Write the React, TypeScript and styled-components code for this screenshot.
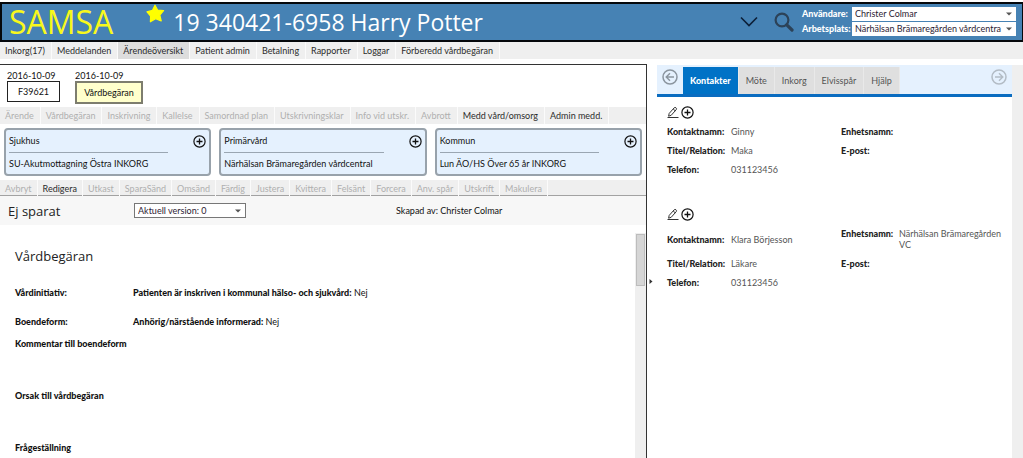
import React from "react";
import styled, { createGlobalStyle } from "styled-components";

const small = '"Lato", "Open Sans", sans-serif';
const large = '"Open Sans", "Noto Sans", sans-serif';

const GlobalStyle = createGlobalStyle`
  *, *::before, *::after { box-sizing: border-box; }
  body { margin: 0; background: #ffffff; color: #111111; font: 9px/11px ${small}; }
  button, select { font: inherit; color: inherit; }
  button { border: 0; padding: 0; background: none; cursor: pointer; }
  h1, h2, p, dl, dd { margin: 0; font-weight: 400; }
`;

const Page = styled.div`
  display: flex;
  flex-direction: column;
  height: 100vh;
  overflow: hidden;
`;

const Header = styled.header`
  flex: none;
  display: flex;
  align-items: center;
  height: 40px;
  margin-top: 2px;
  padding: 0 6px 0 7px;
  border: 2px solid #05080c;
  border-right-width: 1px;
  background: #4682b4;
  color: #ffffff;
`;

const Brand = styled.a`
  font: 32px/36px ${large};
  color: #f8f81c;
  text-decoration: none;
`;

const StarButton = styled.button`
  align-self: flex-start;
  height: 19px;
  margin: 0 8px 0 33px;
`;

const PatientTitle = styled.h1`
  flex: 1;
  font: 23px/36px ${large};
  white-space: nowrap;
`;

const HeaderButton = styled.button`
  display: flex;
  margin-left: 16px;
`;

const Session = styled.div`
  display: grid;
  grid-template-columns: 50px 164px;
  row-gap: 1px;
  align-items: center;
  margin-left: 8px;
  padding-bottom: 2px;
`;

const SessionLabel = styled.label`
  font-weight: 900;
`;

const SelectBox = styled.span<{ $outlined?: boolean }>`
  display: flex;
  align-items: center;
  height: ${(p) => (p.$outlined ? 15 : 14)}px;
  width: ${(p) => (p.$outlined ? "112px" : "auto")};
  padding-right: 4px;
  border: ${(p) => (p.$outlined ? "1px solid #777777" : "0")};
  background: #ffffff;
  color: #2d2233;
`;

const Select = styled.select`
  flex: 1;
  min-width: 0;
  appearance: none;
  border: 0;
  padding: 0 0 0 3px;
  background: transparent;
`;

const Bar = styled.nav`
  flex: none;
  display: flex;
  background: #efefef;
`;

const BarItem = styled.button<{ $active?: boolean; $underlined?: boolean }>`
  height: ${(p) => (p.$underlined ? 16 : 17)}px;
  padding: ${(p) => (p.$underlined ? "0 5px" : "0 6px 0 5px")};
  border-right: 1px solid #fbfbfb;
  background: ${(p) => (p.$active ? "#dddddd" : "#efefef")};
  color: #2b2b2b;
  white-space: nowrap;
  box-shadow: ${(p) => (p.$underlined ? "inset 0 -1px 0 #a2a2a2" : "none")};

  &:disabled {
    color: #b0b0b0;
    cursor: default;
  }
`;

const BarRest = styled.span`
  flex: 1;
  border-bottom: 1px solid #a2a2a2;
`;

const Main = styled.main`
  flex: 1;
  min-height: 0;
  display: grid;
  grid-template-columns: minmax(0, 647fr) minmax(0, 376fr);
`;

const CasePanel = styled.section`
  display: flex;
  flex-direction: column;
  min-height: 0;
  margin-top: 5px;
  border-top: 1px solid #333333;
  border-right: 1px solid #333333;
`;

const Documents = styled.div`
  display: flex;
  gap: 15px;
  padding: 5px 7px 3px;
`;

const DocumentEntry = styled.div`
  display: flex;
  flex-direction: column;
`;

const DocumentButton = styled.button<{ $selected?: boolean }>`
  min-width: ${(p) => (p.$selected ? 68 : 53)}px;
  height: ${(p) => (p.$selected ? 23 : 21)}px;
  border: ${(p) => (p.$selected ? "2px solid #7d7d6e" : "1px solid #222222")};
  background: ${(p) => (p.$selected ? "#ffffcc" : "#ffffff")};
`;

const Units = styled.div`
  display: grid;
  grid-template-columns: repeat(3, minmax(0, 1fr));
  gap: 8px;
  padding: 4px;
`;

const UnitCard = styled.article`
  display: flex;
  align-items: flex-start;
  justify-content: space-between;
  height: 48px;
  padding: 5px 3px 0;
  border: 2px solid #98a2ab;
  border-radius: 4px;
  background: #e5f1fe;
`;

const UnitText = styled.div`
  flex: 1;
  margin-right: 25px;
  white-space: nowrap;
`;

const UnitName = styled.h2`
  font-size: 9px;
  line-height: 12px;
  padding-bottom: 5px;
  border-bottom: 1px solid #9aa6b2;
  margin-bottom: 5px;
`;

const IconButton = styled.button`
  display: flex;
`;

const VersionRow = styled.div`
  display: grid;
  grid-template-columns: 126px 262px 1fr;
  align-items: center;
  flex: none;
  height: 29px;
  padding-left: 8px;
  background: #f7f7f7;
`;

const Heading = styled.h2`
  font: 13px/18px ${large};
  color: #222222;
`;

const ScrollArea = styled.div`
  flex: 1;
  min-height: 0;
  display: flex;
  justify-content: space-between;
  padding-top: 8px;
  overflow: hidden;
`;

const Form = styled.div`
  padding: 14px 0 0 15px;
`;

const FormRow = styled.div<{ $height: number }>`
  display: grid;
  grid-template-columns: 118px auto;
  height: ${(p) => p.$height}px;
  white-space: nowrap;
`;

const FieldName = styled.strong`
  font-weight: 900;
`;

const Track = styled.div`
  width: 11px;
  padding: 1px;
  background: #efefef;
`;

const Thumb = styled.div`
  height: 52px;
  border: 1px solid #bdbdbd;
  background: #d6d6d6;
`;

const SidePanel = styled.aside`
  display: grid;
  grid-template-columns: 10px minmax(0, 1fr) 11px;
  margin-top: 6px;
  min-height: 0;
`;

const Splitter = styled.button`
  align-self: start;
  margin-top: 214px;
  padding-left: 2px;
  display: flex;
`;

const Gutter = styled.div`
  background: #efefef;
`;

const Tabs = styled.div`
  display: flex;
  align-items: flex-end;
  height: 32px;
  border-bottom: 3px solid #0a6cc0;
  background: #e5f1fe;
`;

const Tab = styled.button<{ $active?: boolean }>`
  height: 27px;
  padding: 0 7px;
  border-right: 1px solid #e9e9e9;
  background: ${(p) => (p.$active ? "#0072c6" : "#dfdfdf")};
  color: ${(p) => (p.$active ? "#ffffff" : "#555555")};
  font-weight: ${(p) => (p.$active ? 900 : 400)};
`;

const TabArrow = styled.button<{ $end?: boolean }>`
  display: flex;
  align-self: center;
  margin: ${(p) => (p.$end ? "0 5px 6px auto" : "0 5px 6px")};
`;

const Contact = styled.section`
  padding: 9px 4px 20px 10px;
`;

const ContactTools = styled.div`
  display: flex;
  gap: 2px;
  height: 14px;
  margin-bottom: 2px;
`;

const ContactGrid = styled.dl`
  display: grid;
  grid-template-columns: 174px minmax(0, 1fr);
`;

const ContactField = styled.div<{ $top?: boolean }>`
  display: grid;
  grid-template-columns: ${(p) => (p.$top ? "58px" : "64px")} minmax(0, 1fr);
  align-items: ${(p) => (p.$top ? "start" : "center")};
  padding: 4px 0;
  color: #555555;
`;

const ContactLabel = styled.dt`
  font-weight: 900;
  color: #222222;
`;

const DownArrow = () => (
  <svg width="6" height="4" viewBox="0 0 6 4" aria-hidden="true">
    <path d="M0 0.5h6L3 3.5z" fill="#555555" />
  </svg>
);

const PlusCircle = () => (
  <svg width="13" height="13" viewBox="0 0 13 13" fill="none" stroke="#111111" aria-hidden="true">
    <circle cx="6.5" cy="6.5" r="5.6" strokeWidth="1.2" />
    <path d="M6.5 3.5v6M3.5 6.5h6" strokeWidth="1.3" />
  </svg>
);

const Pencil = () => (
  <svg width="12" height="13" viewBox="0 0 12 13" fill="none" stroke="#333333" strokeWidth="1" aria-hidden="true">
    <path d="M1.6 10.2 2.2 7.4 7.2 1.8Q8 1 9 1.8T9.2 3.7L4.2 9.3zM6.2 3 8.2 4.8M0.5 11.5h11" />
  </svg>
);

const ArrowCircle = ({ left }: { left?: boolean }) => (
  <svg width="16" height="16" viewBox="0 0 16 16" fill="none" stroke={left ? "#8b959f" : "#b3bcc5"} aria-hidden="true">
    <circle cx="8" cy="8" r="7" strokeWidth="1.5" />
    <path d={left ? "M12 8H4.5M8 4.2 4.2 8 8 11.8" : "M4 8h7.5M8 4.2 11.8 8 8 11.8"} strokeWidth="1.4" />
  </svg>
);

const navItems = ["Inkorg(17)", "Meddelanden", "Ärendeöversikt", "Patient admin", "Betalning", "Rapporter", "Loggar", "Förberedd vårdbegäran"];
const caseActions = ["Ärende", "Vårdbegäran", "Inskrivning", "Kallelse", "Samordnad plan", "Utskrivningsklar", "Info vid utskr.", "Avbrott", "Medd vård/omsorg", "Admin medd."];
const enabledCaseActions = ["Medd vård/omsorg", "Admin medd."];
const documentActions = ["Avbryt", "Redigera", "Utkast", "SparaSänd", "Omsänd", "Färdig", "Justera", "Kvittera", "Felsänt", "Forcera", "Anv. spår", "Utskrift", "Makulera"];
const units = [
  { name: "Sjukhus", inbox: "SU-Akutmottagning Östra INKORG" },
  { name: "Primärvård", inbox: "Närhälsan Brämaregården vårdcentral" },
  { name: "Kommun", inbox: "Lun ÄO/HS Över 65 år INKORG" },
];
const tabs = ["Kontakter", "Möte", "Inkorg", "Elvisspår", "Hjälp"];
const contacts = [
  { name: "Ginny", relation: "Maka", phone: "031123456", unit: "", email: "" },
  { name: "Klara Börjesson", relation: "Läkare", phone: "031123456", unit: "Närhälsan Brämaregården VC", email: "" },
];

const Field = ({ label, value, top }: { label: string; value: string; top?: boolean }) => (
  <ContactField $top={top}>
    <ContactLabel>{label}</ContactLabel>
    <dd>{value}</dd>
  </ContactField>
);

export default function App() {
  return (
    <Page>
      <GlobalStyle />
      <Header>
        <Brand href="#">SAMSA</Brand>
        <StarButton aria-label="Favorit">
          <svg width="19" height="19" viewBox="0 0 19 19" aria-hidden="true">
            <path
              d="M9 1.2 11.6 6 17.6 6.6 13.8 11 15.2 17 9.6 14.8 4.4 17.8 4.6 12 1 7.8 6.4 6.4z"
              fill="#ffff00"
              stroke="#ffff00"
              strokeWidth="1.2"
              strokeLinejoin="round"
            />
          </svg>
        </StarButton>
        <PatientTitle>19 340421-6958 Harry Potter</PatientTitle>
        <HeaderButton aria-label="Visa mer">
          <svg width="18" height="12" viewBox="0 0 18 12" fill="none" stroke="#0c1f38" strokeWidth="1.6" aria-hidden="true">
            <path d="M1 1.5 9 9.5 17 1.5" />
          </svg>
        </HeaderButton>
        <HeaderButton aria-label="Sök">
          <svg width="20" height="20" viewBox="0 0 20 20" fill="none" stroke="#2c4258" aria-hidden="true">
            <circle cx="8" cy="8" r="6.4" strokeWidth="2.2" />
            <path d="M12.8 12.8 18 18" strokeWidth="3.2" strokeLinecap="round" />
          </svg>
        </HeaderButton>
        <Session>
          <SessionLabel htmlFor="user">Användare:</SessionLabel>
          <SelectBox>
            <Select id="user">
              <option>Christer Colmar</option>
            </Select>
            <DownArrow />
          </SelectBox>
          <SessionLabel htmlFor="workplace">Arbetsplats:</SessionLabel>
          <SelectBox>
            <Select id="workplace">
              <option>Närhälsan Brämaregården vårdcentra</option>
            </Select>
            <DownArrow />
          </SelectBox>
        </Session>
      </Header>

      <Bar>
        {navItems.map((item) => (
          <BarItem key={item} $active={item === "Ärendeöversikt"}>{item}</BarItem>
        ))}
      </Bar>

      <Main>
        <CasePanel>
          <Documents>
            <DocumentEntry>
              <time>2016-10-09</time>
              <DocumentButton>F39621</DocumentButton>
            </DocumentEntry>
            <DocumentEntry>
              <time>2016-10-09</time>
              <DocumentButton $selected>Vårdbegäran</DocumentButton>
            </DocumentEntry>
          </Documents>

          <Bar>
            {caseActions.map((item) => (
              <BarItem key={item} disabled={!enabledCaseActions.includes(item)}>{item}</BarItem>
            ))}
          </Bar>

          <Units>
            {units.map((unit) => (
              <UnitCard key={unit.name}>
                <UnitText>
                  <UnitName>{unit.name}</UnitName>
                  <p>{unit.inbox}</p>
                </UnitText>
                <IconButton aria-label={`Lägg till ${unit.name}`}><PlusCircle /></IconButton>
              </UnitCard>
            ))}
          </Units>

          <Bar>
            {documentActions.map((item) => (
              <BarItem key={item} $underlined disabled={item !== "Redigera"}>{item}</BarItem>
            ))}
            <BarRest />
          </Bar>

          <VersionRow>
            <Heading>Ej sparat</Heading>
            <SelectBox $outlined>
              <Select aria-label="Version">
                <option>Aktuell version: 0</option>
              </Select>
              <DownArrow />
            </SelectBox>
            <p>Skapad av: Christer Colmar</p>
          </VersionRow>

          <ScrollArea>
            <Form>
              <FormRow $height={40}>
                <Heading>Vårdbegäran</Heading>
              </FormRow>
              <FormRow $height={29}>
                <FieldName>Vårdinitiativ:</FieldName>
                <p><FieldName>Patienten är inskriven i kommunal hälso- och sjukvård:</FieldName> Nej</p>
              </FormRow>
              <FormRow $height={22}>
                <FieldName>Boendeform:</FieldName>
                <p><FieldName>Anhörig/närstående informerad:</FieldName> Nej</p>
              </FormRow>
              <FormRow $height={52}><FieldName>Kommentar till boendeform</FieldName></FormRow>
              <FormRow $height={52}><FieldName>Orsak till vårdbegäran</FieldName></FormRow>
              <FormRow $height={52}><FieldName>Frågeställning</FieldName></FormRow>
            </Form>
            <Track><Thumb /></Track>
          </ScrollArea>
        </CasePanel>

        <SidePanel>
          <Splitter aria-label="Fäll ihop panelen">
            <svg width="4" height="5" viewBox="0 0 4 5" aria-hidden="true">
              <path d="M0.5 0 3.5 2.5 0.5 5z" fill="#333333" />
            </svg>
          </Splitter>
          <div>
            <Tabs>
              <TabArrow aria-label="Föregående"><ArrowCircle left /></TabArrow>
              {tabs.map((tab) => (
                <Tab key={tab} $active={tab === "Kontakter"}>{tab}</Tab>
              ))}
              <TabArrow $end aria-label="Nästa"><ArrowCircle /></TabArrow>
            </Tabs>
            {contacts.map((contact) => (
              <Contact key={contact.name}>
                <ContactTools>
                  <IconButton aria-label="Redigera kontakt"><Pencil /></IconButton>
                  <IconButton aria-label="Lägg till kontakt"><PlusCircle /></IconButton>
                </ContactTools>
                <ContactGrid>
                  <Field label="Kontaktnamn:" value={contact.name} />
                  <Field label="Enhetsnamn:" value={contact.unit} top />
                  <Field label="Titel/Relation:" value={contact.relation} />
                  <Field label="E-post:" value={contact.email} top />
                  <Field label="Telefon:" value={contact.phone} />
                </ContactGrid>
              </Contact>
            ))}
          </div>
          <Gutter />
        </SidePanel>
      </Main>
    </Page>
  );
}
